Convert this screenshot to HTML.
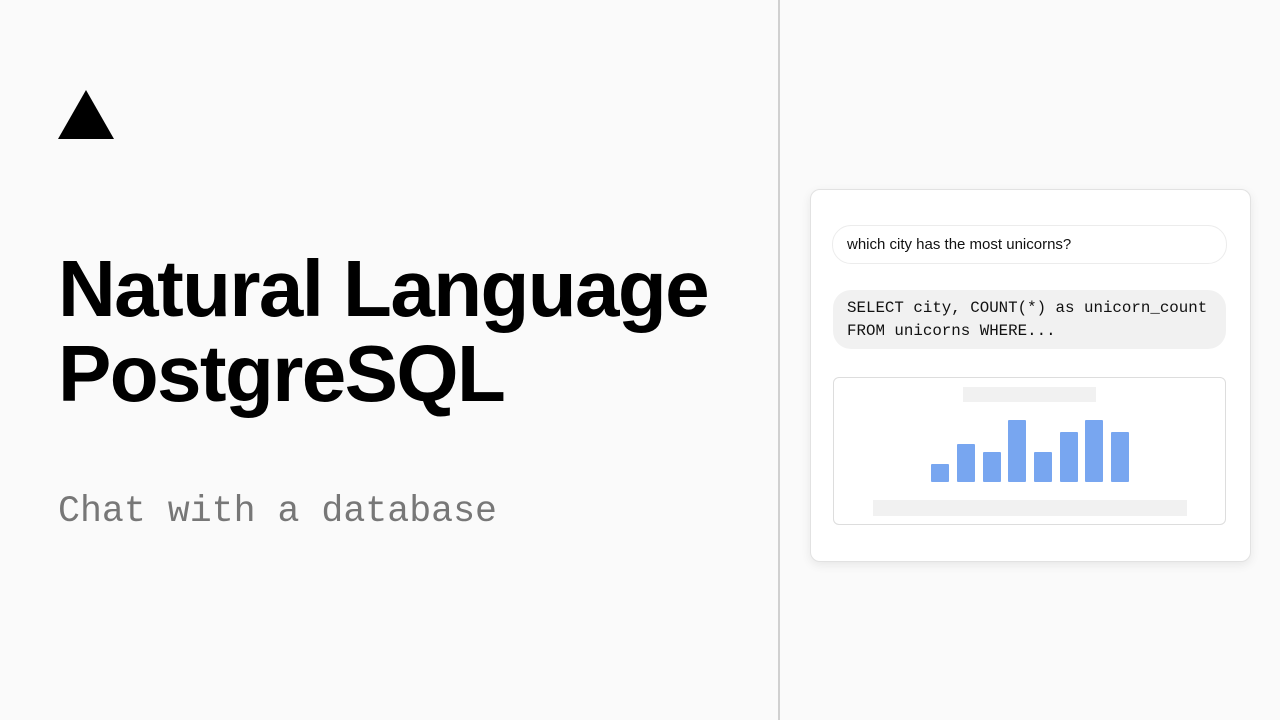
<!DOCTYPE html>
<html><head><meta charset="utf-8"><style>
html,body{margin:0;padding:0}
body{width:1280px;height:720px;background:#fafafa;position:relative;overflow:hidden;font-family:"Liberation Sans",sans-serif}
.tri{position:absolute;left:58px;top:90px;width:0;height:0;border-left:28px solid transparent;border-right:28px solid transparent;border-bottom:49px solid #000}
h1{position:absolute;left:58px;top:246px;margin:0;font-size:80px;line-height:85px;font-weight:700;letter-spacing:-1.6px;color:#000}
.sub{position:absolute;left:58px;top:490px;font-family:"Liberation Mono",monospace;font-size:36.6px;color:#777;line-height:44px;white-space:pre}
.div{position:absolute;left:778px;top:0;width:2px;height:720px;background:#d0d0d0}
.card{position:absolute;left:810px;top:189px;width:439px;height:371px;background:#fff;border:1px solid #e2e2e2;border-radius:10px;box-shadow:0 3px 10px rgba(0,0,0,.08)}
.q{position:absolute;left:832px;top:225px;width:393px;height:37px;border:1px solid #ececec;border-radius:19px;background:#fff}
.q span{position:absolute;left:14px;top:10px;font-size:15px;color:#111}
.sql{position:absolute;left:833px;top:290px;width:393px;height:59px;background:#f1f1f1;border-radius:18px}
.sql pre{margin:0;position:absolute;left:14px;top:7px;font-family:"Liberation Mono",monospace;font-size:15.8px;line-height:23px;color:#111}
.chart{position:absolute;left:833px;top:377px;width:391px;height:146px;border:1px solid #ddd;border-radius:6px;background:#fff}
.g{position:absolute;background:#f1f1f1}
.b{position:absolute;width:18px;background:#78a6f0;border-radius:1px}
</style></head><body>
<div class="tri"></div>
<h1>Natural Language<br>PostgreSQL</h1>
<div class="sub">Chat with a database</div>
<div class="div"></div>
<div class="card"></div>
<div class="q"><span>which city has the most unicorns?</span></div>
<div class="sql"><pre>SELECT city, COUNT(*) as unicorn_count
FROM unicorns WHERE...</pre></div>
<div class="chart"></div>
<div class="g" style="left:963px;top:387px;width:133px;height:15px"></div>
<div class="g" style="left:873px;top:500px;width:314px;height:16px"></div>
<div class="b" style="left:931px;top:464px;height:18px"></div>
<div class="b" style="left:957px;top:444px;height:38px"></div>
<div class="b" style="left:983px;top:452px;height:30px"></div>
<div class="b" style="left:1008px;top:420px;height:62px"></div>
<div class="b" style="left:1034px;top:452px;height:30px"></div>
<div class="b" style="left:1060px;top:432px;height:50px"></div>
<div class="b" style="left:1085px;top:420px;height:62px"></div>
<div class="b" style="left:1111px;top:432px;height:50px"></div>
</body></html>
